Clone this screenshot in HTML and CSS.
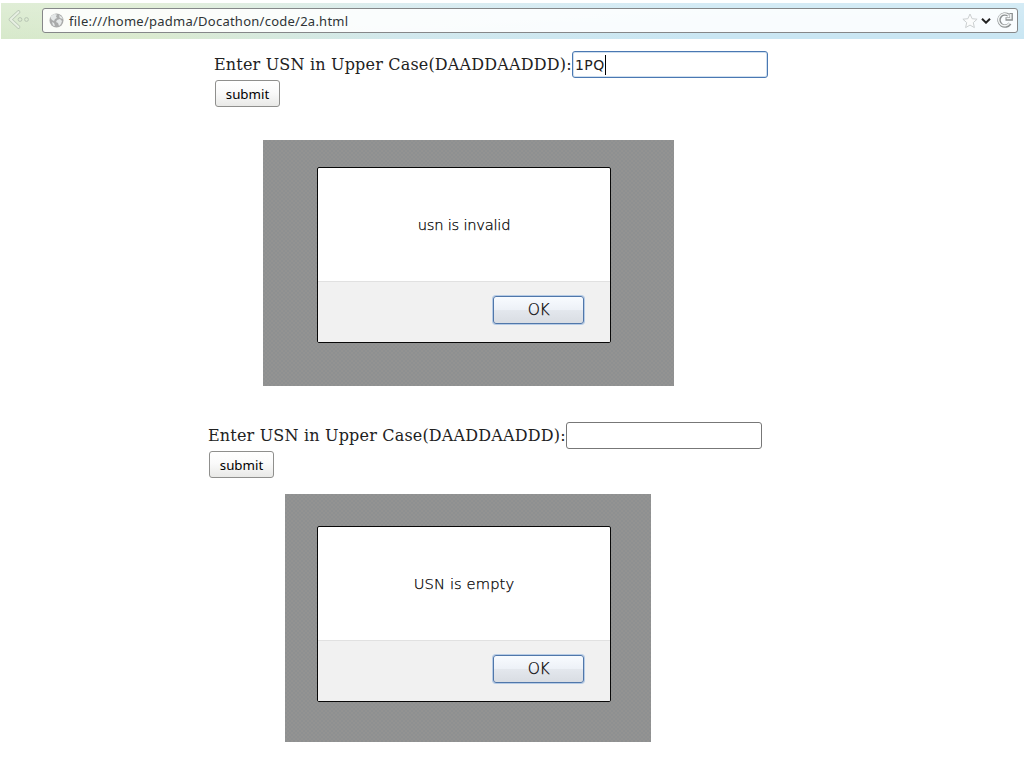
FILE: index.html
```html
<!DOCTYPE html>
<html lang="en">
<head>
<meta charset="utf-8">
<title>2a.html</title>
<link rel="stylesheet" href="styles.css">
</head>
<body>
<header class="toolbar">
  <svg class="back" width="24" height="22" viewBox="0 0 24 22" fill="none">
    <path d="M10.500 3 2.500 10.500l8 7.500" stroke="#b9c6b5" stroke-width="3.600" stroke-linejoin="round" stroke-linecap="round"/>
    <path d="M10.500 3 2.500 10.500l8 7.500" stroke="#e7f0e2" stroke-width="2" stroke-linejoin="round" stroke-linecap="round"/>
    <circle cx="12" cy="10.500" r="1.900" stroke="#b9c6b5"/><circle cx="18.500" cy="10.500" r="1.900" stroke="#b9c6b5"/>
  </svg>
  <div class="address">
    <svg class="globe" width="15" height="15" viewBox="0 0 15 15">
      <circle cx="7.500" cy="7.500" r="7" fill="#a9abab"/>
      <path d="M2 3l3-2 3 .5-1 2 1 1.500-2 1-1 2-2-1-1.500-2zM8 7l3-1 2 2-1 3-2 2-1-3-2-1zM10 2l3 2 .8 2-3-1zM3 9l2 1 1 3-2-.6z" fill="#e4e8e8"/>
    </svg>
    <span class="url">file:///home/padma/Docathon/code/2a.html</span>
    <svg class="star" width="16" height="16" viewBox="0 0 16 16"><path d="M8 1l2.100 4.700 5 .5-3.800 3.400 1.100 5L8 12.100l-4.400 2.500 1.100-5L.9 6.200l5-.5z" fill="#fbfcfc" stroke="#ccd0d1"/></svg>
    <svg class="chevron" width="10" height="6" viewBox="0 0 10 6"><path d="M1 .8l4 3.900L9 .8" fill="none" stroke="#222" stroke-width="2"/></svg>
    <svg class="reload" width="16" height="16" viewBox="0 0 16 16" fill="none">
      <path d="M13 11.500A6 6 0 1 1 11.500 3.200M14.200 1v6H8.500" stroke="#8d9192" stroke-width="3.400"/>
      <path d="M12.500 11.200A6 6 0 1 1 11.500 3.200M13.800 2v4.600H9.500" stroke="#f1f4f4" stroke-width="1.500"/>
    </svg>
  </div>
</header>
<main>
  <form class="usn first">
    <div class="row"><label class="prompt">Enter USN in Upper Case(DAADDAADDD):</label><div class="field focused"><span class="value">1PQ</span><i class="caret"></i></div></div>
    <button type="button" class="submit">submit</button>
  </form>
  <section class="backdrop wide">
    <div class="dialog">
      <div class="message"><span class="invalid">usn is invalid</span></div>
      <div class="actions"><button type="button" class="ok">OK</button></div>
    </div>
  </section>
  <form class="usn second">
    <div class="row"><label class="prompt">Enter USN in Upper Case(DAADDAADDD):</label><div class="field"></div></div>
    <button type="button" class="submit">submit</button>
  </form>
  <section class="backdrop narrow">
    <div class="dialog">
      <div class="message"><span class="empty">USN is empty</span></div>
      <div class="actions"><button type="button" class="ok">OK</button></div>
    </div>
  </section>
</main>
</body>
</html>
```
FILE: styles.css
```css
* { box-sizing: border-box; }
body { margin: 0; height: 768px; overflow: hidden; background: #fff; }
svg { display: block; flex: none; }
.toolbar { display: flex; align-items: flex-start; height: 36px; margin: 3px 0 0 1px; padding: 5px 6px 0 7px; background: linear-gradient(rgba(255,255,255,.22), transparent), linear-gradient(90deg, #d7e9cb 0, #daeacf 150px, #d1e8ed 400px, #c9e6f3 700px, #c9e6f3 100%); }
.back { margin: 1px 10px 0 0; }
.address { display: flex; align-items: center; flex: 1; height: 25px; padding: 0 4px 0 6px; border: 1px solid #858789; border-radius: 3px; background: rgba(255,255,255,.87); }
.url { margin-left: 5px; margin-right: auto; font: 13px/22px "Noto Sans", sans-serif; letter-spacing: .25px; color: #2e3436; white-space: nowrap; }
.chevron { margin: 0 6px 0 3px; }
.reload { margin-top: -2px; }
.usn { display: block; margin: 0; height: 58px; }
.first { margin: 12px 0 0 214px; }
.second { margin: 36px 0 0 208px; }
.row { display: flex; align-items: center; height: 27px; }
.prompt { width: 358px; flex: none; font: 16px/27px "DejaVu Serif", serif; letter-spacing: .18px; color: #222; white-space: nowrap; }
.field { display: flex; align-items: center; width: 196px; height: 27px; padding-left: 2px; border: 1px solid #777; border-radius: 3px; background: #fff; }
.focused { border-color: #4a78b2; box-shadow: inset 0 0 0 1px #cfdfef; }
.value { font: 14px/20px "DejaVu Sans", sans-serif; letter-spacing: .4px; color: #222; }
.caret { width: 1px; height: 20px; background: #000; }
.submit { display: block; width: 65px; height: 27px; margin: 2px 0 0 1px; padding: 2px 0 0; border: 1px solid #8f8f8d; border-radius: 3px; background: linear-gradient(#fff, #fafafa 45%, #e9e9e7); font: 13.3px/23px "Noto Sans", sans-serif; color: #000; }
.backdrop { background: repeating-conic-gradient(#8e9091 0 25%, #939392 0 50%) 0 0 / 4px 4px; }
.wide { width: 411px; height: 246px; margin: 31px 0 0 263px; padding: 27px 0 0 54px; }
.narrow { width: 366px; height: 248px; margin: 14px 0 0 285px; padding: 32px 0 0 32px; }
.dialog { width: 294px; height: 176px; border: 1px solid #080808; border-radius: 2px; background: #fff; overflow: hidden; }
.message { display: flex; align-items: center; justify-content: center; height: 113px; padding-top: 1px; font: 200 14.7px/20px "DejaVu Sans", sans-serif; color: #000; -webkit-text-stroke: .25px #000; }
.invalid { letter-spacing: -.25px; }
.empty { letter-spacing: .1px; }
.actions { display: flex; justify-content: flex-end; height: 61px; padding: 14px 26px 0 0; border-top: 1px solid #e1e1e1; background: #f1f1f1; }
.ok { width: 91px; height: 28px; padding: 0; border: 1px solid #5077aa; border-radius: 3px; box-shadow: 0 0 0 1px #b6cbe5; background: linear-gradient(#f8fbff, #edf1f7 48%, #e3e7ed 52%, #d9dde3); font: 200 15.5px/26px "DejaVu Sans", sans-serif; letter-spacing: -.5px; color: #000; -webkit-text-stroke: .25px #000; }
```
